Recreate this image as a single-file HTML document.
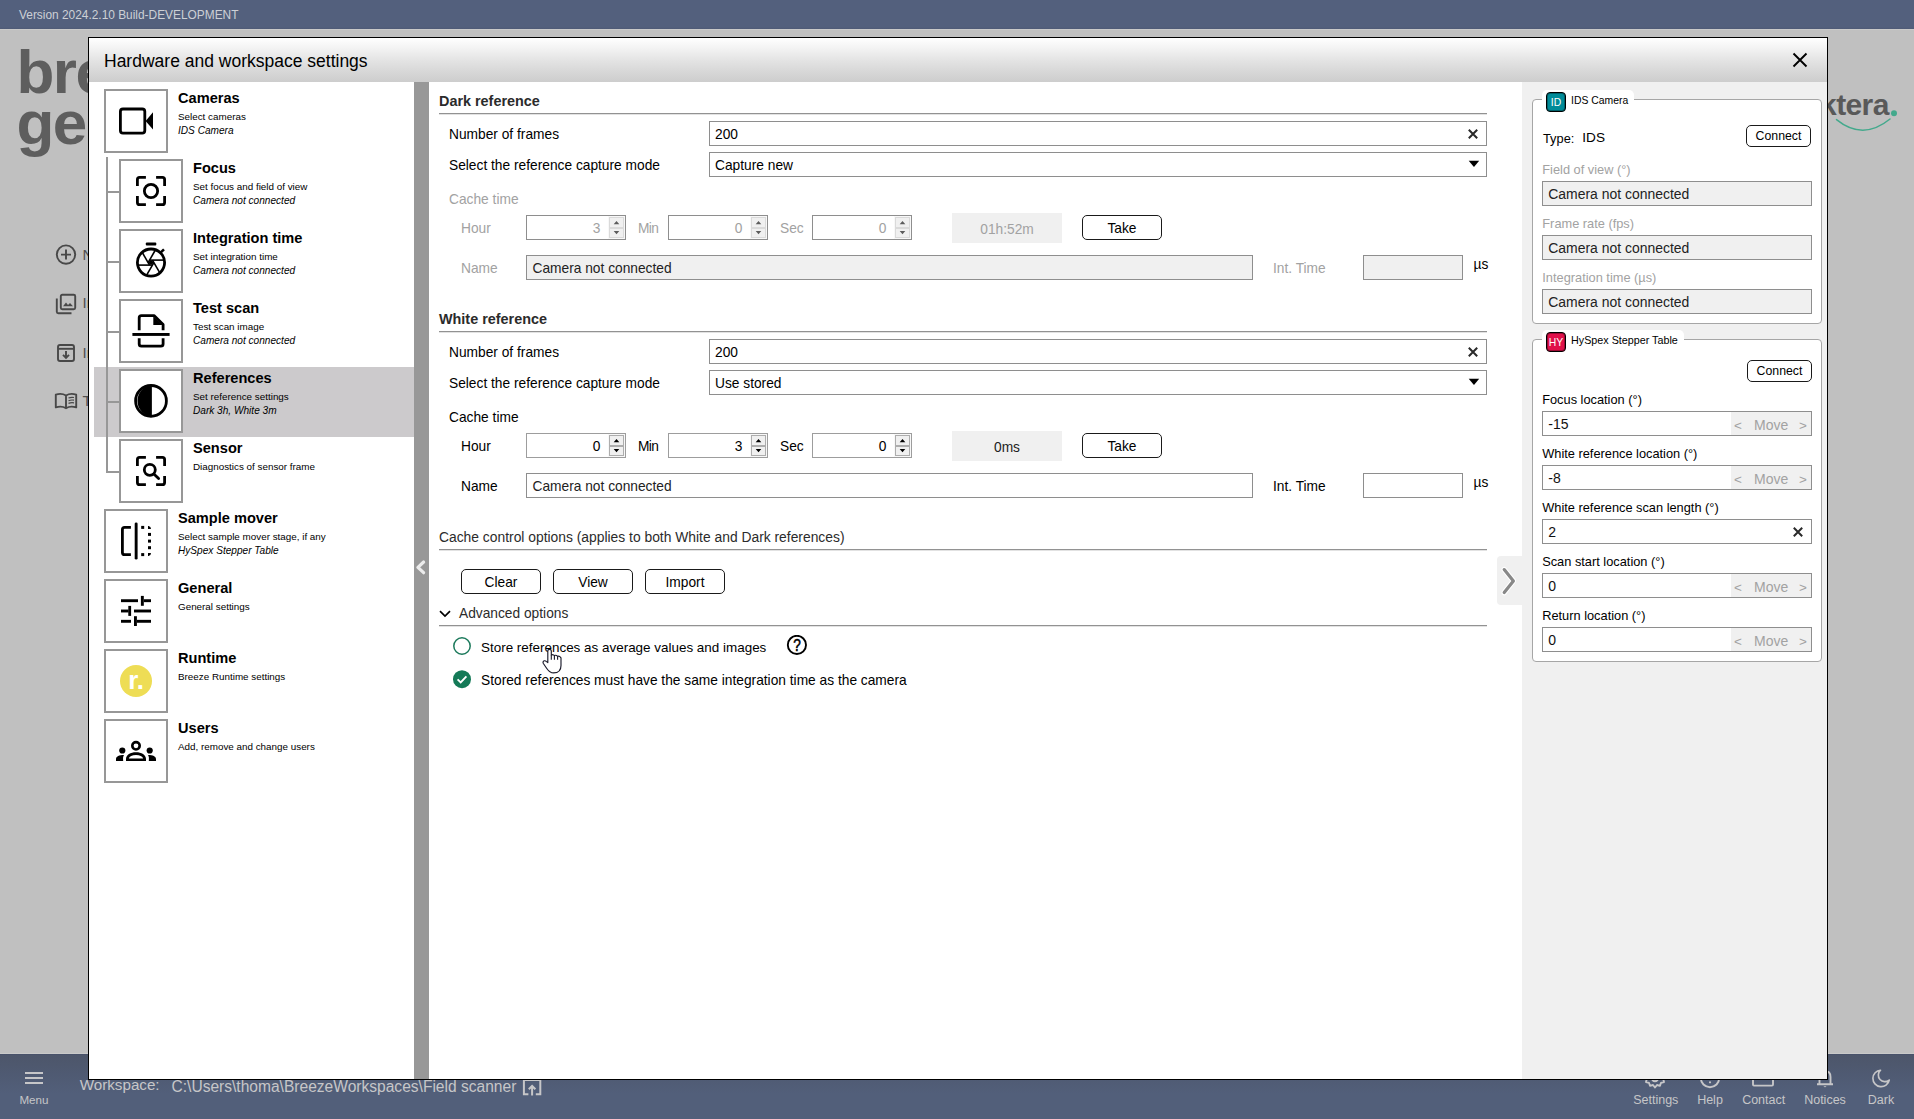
<!DOCTYPE html>
<html lang="en">
<head>
<meta charset="utf-8">
<title>Hardware and workspace settings</title>
<style>
*{box-sizing:border-box;margin:0;padding:0}
html,body{width:1914px;height:1119px;overflow:hidden;background:#c0c0c0}
body{font-family:"Liberation Sans",sans-serif;font-size:13.75px;color:#000;position:relative}
.a{position:absolute;white-space:nowrap;display:block}
.in{border:1px solid #8e8e8e;background:#fff}
.dis{background:#f0f0f0}
.btn{border:1px solid #1a1a1a;border-radius:5px;background:#fff}
.ib{border:2px solid #979797;background:#fff}
.ul{background:#929292;height:1px;box-shadow:0 1px 0 #e2e2e2}
</style>
</head>
<body>
<span class="a" style="top:37px;font-size:62px;line-height:70px;color:#5e5e5e;left:16.5px;font-weight:bold;letter-spacing:-1.5px;">breeze</span>
<span class="a" style="top:88px;font-size:62px;line-height:70px;color:#5e5e5e;left:16.5px;font-weight:bold;letter-spacing:-1.5px;">geo</span>
<svg class="a" style="left:55px;top:244px;" width="22" height="22" viewBox="0 0 22 22"><circle cx="11" cy="10.6" r="9.2" fill="none" stroke="#484848" stroke-width="1.9"/><path d="M11 5.6 V15.6 M6 10.6 H16" stroke="#484848" stroke-width="1.9" fill="none"/></svg>
<span class="a" style="top:245px;font-size:15px;line-height:20px;color:#505050;left:82.5px;">New</span>
<svg class="a" style="left:55px;top:293px;" width="22" height="22" viewBox="0 0 22 22"><rect x="5.8" y="1.8" width="14.4" height="14.4" rx="1.5" fill="none" stroke="#484848" stroke-width="1.9"/><path d="M1.8 5.5 V18.7 Q1.8 20.2 3.3 20.2 H16.5" fill="none" stroke="#484848" stroke-width="1.9"/><path d="M8 13.2 L11 9.5 L13 12 L15 10 L18 13.2 Z" fill="#484848"/></svg>
<span class="a" style="top:293px;font-size:15px;line-height:20px;color:#505050;left:82.5px;">Images</span>
<svg class="a" style="left:56px;top:343px;" width="20" height="20" viewBox="0 0 20 20"><rect x="2" y="2" width="16" height="16" rx="2" fill="none" stroke="#484848" stroke-width="1.9"/><path d="M2 5.8 H18" stroke="#484848" stroke-width="1.9"/><path d="M10 8 V14.5 M7 11.8 L10 14.8 L13 11.8" stroke="#484848" stroke-width="1.9" fill="none"/></svg>
<span class="a" style="top:343px;font-size:15px;line-height:20px;color:#505050;left:82.5px;">Import</span>
<svg class="a" style="left:54px;top:392px;" width="24" height="18" viewBox="0 0 24 18"><path d="M12 3.5 C9 1.6 5 1.6 1.8 2.6 V15.4 C5 14.4 9 14.4 12 16.2 C15 14.4 19 14.4 22.2 15.4 V2.6 C19 1.6 15 1.6 12 3.5 V16" fill="none" stroke="#484848" stroke-width="1.9" stroke-linejoin="round"/><path d="M14.5 6 C16.5 5.2 18.5 5.2 20 5.5 M14.5 8.7 C16.5 7.9 18.5 7.9 20 8.2 M14.5 11.4 C16.5 10.6 18.5 10.6 20 10.9" fill="none" stroke="#484848" stroke-width="1.2"/></svg>
<span class="a" style="top:391px;font-size:15px;line-height:20px;color:#505050;left:82.5px;">Tutorials</span>
<span class="a" style="top:85px;font-size:30px;line-height:40px;color:#595959;left:1488.8px;width:400px;text-align:right;font-weight:bold;letter-spacing:-0.6px;">prediktera</span>
<svg class="a" style="left:1830px;top:105px;" width="70" height="30" viewBox="0 0 70 30"><circle cx="64" cy="8.2" r="3" fill="#43a98c"/><path d="M6.5 14.6 Q33 36 60 14" fill="none" stroke="#43a98c" stroke-width="1.5" stroke-linecap="round"/></svg>
<div class="a" style="left:0px;top:0px;width:1914px;height:29px;background:linear-gradient(#53607d 0px,#53607d 27px,#4e5a76 29px)"></div>
<div class="a" style="left:0px;top:29px;width:1914px;height:1px;background:#c9c9c9"></div>
<span class="a" style="top:5px;font-size:11.9px;line-height:20px;color:#cdd0d6;left:19px;">Version 2024.2.10 Build-DEVELOPMENT</span>
<div class="a" style="left:0px;top:1053px;width:1914px;height:1px;background:#c9c9c9"></div>
<div class="a" style="left:0px;top:1054px;width:1914px;height:65px;background:linear-gradient(#465069 0px,#4d566a 1.5px,#4f5a72 20px,#525f7a 40px,#525f7a 65px)"></div>
<div class="a" style="left:25px;top:1071.5px;width:18px;height:2px;background:#c6c6c8"></div>
<div class="a" style="left:25px;top:1076.8px;width:18px;height:2px;background:#c6c6c8"></div>
<div class="a" style="left:25px;top:1082.2px;width:18px;height:2px;background:#c6c6c8"></div>
<span class="a" style="top:1090px;font-size:11.6px;line-height:20px;color:#c6c6c8;left:-166.1px;width:400px;text-align:center;">Menu</span>
<span class="a" style="top:1075px;font-size:15.2px;line-height:20px;color:#c6c6c8;left:79.7px;">Workspace:</span>
<span class="a" style="top:1077px;font-size:15.57px;line-height:20px;color:#c6c6c8;left:171.5px;">C:\Users\thoma\BreezeWorkspaces\Field scanner</span>
<svg class="a" style="left:522px;top:1077px;" width="20" height="20" viewBox="0 0 20 20"><path d="M6.4 17.3 H1.9 V3 H18.3 V17.3 H13.8" fill="none" stroke="#c6c6c8" stroke-width="2"/><path d="M10.1 18.4 V9.6 M6.8 12.3 L10.1 9 L13.4 12.3" fill="none" stroke="#c6c6c8" stroke-width="2"/></svg>
<span class="a" style="top:1090px;font-size:12.5px;line-height:20px;color:#c6c6c8;left:1455.8px;width:400px;text-align:center;">Settings</span>
<span class="a" style="top:1090px;font-size:12.5px;line-height:20px;color:#c6c6c8;left:1510px;width:400px;text-align:center;">Help</span>
<span class="a" style="top:1090px;font-size:12.5px;line-height:20px;color:#c6c6c8;left:1563.7px;width:400px;text-align:center;">Contact</span>
<span class="a" style="top:1090px;font-size:12.5px;line-height:20px;color:#c6c6c8;left:1625px;width:400px;text-align:center;">Notices</span>
<span class="a" style="top:1090px;font-size:12.5px;line-height:20px;color:#c6c6c8;left:1681px;width:400px;text-align:center;">Dark</span>
<svg class="a" style="left:1643px;top:1066px;" width="24" height="24" viewBox="0 0 24 24"><circle cx="12" cy="12" r="3.2" fill="none" stroke="#c6c6c8" stroke-width="1.9"/><path d="M12 2.5 L14 5 L17 4.2 L18 7.2 L21 8 L20.2 11 L22 12 L20.2 13 L21 16 L18 16.8 L17 19.8 L14 19 L12 21.5 L10 19 L7 19.8 L6 16.8 L3 16 L3.8 13 L2 12 L3.8 11 L3 8 L6 7.2 L7 4.2 L10 5 Z" fill="none" stroke="#c6c6c8" stroke-width="1.9" stroke-linejoin="round"/></svg>
<svg class="a" style="left:1698px;top:1066px;" width="24" height="24" viewBox="0 0 24 24"><circle cx="12" cy="12" r="9.2" fill="none" stroke="#c6c6c8" stroke-width="1.9"/><circle cx="12" cy="16.3" r="1.1" fill="#c6c6c8"/></svg>
<svg class="a" style="left:1751px;top:1066px;" width="24" height="24" viewBox="0 0 24 24"><rect x="2" y="5" width="20" height="14.6" rx="1" fill="none" stroke="#c6c6c8" stroke-width="1.9"/></svg>
<svg class="a" style="left:1813px;top:1066px;" width="24" height="24" viewBox="0 0 24 24"><path d="M4 18.3 H20 M6.5 18 V11 C6.5 7 9 5 12 5 C15 5 17.5 7 17.5 11 V18" fill="none" stroke="#c6c6c8" stroke-width="1.9"/><path d="M10.5 20.3 H13.5 Q12 22 10.5 20.3Z" fill="#c6c6c8"/></svg>
<svg class="a" style="left:1870px;top:1067px;" width="22" height="22" viewBox="0 0 24 24"><path d="M11.5 3.5 A9 9 0 1 0 21 14.2 A6.8 6.8 0 0 1 11.5 3.5 Z" fill="none" stroke="#c6c6c8" stroke-width="1.8" stroke-linejoin="round"/></svg>
<div class="a" style="left:88px;top:37px;width:1740px;height:1043px;background:#000"></div>
<div class="a" style="left:89px;top:38px;width:1738px;height:44px;background:linear-gradient(#ffffff 0%,#f2f2f2 25%,#e4e4e4 50%,#d8d8d8 75%,#cdcdcd 100%)"></div>
<span class="a" style="top:49px;font-size:17.5px;line-height:24px;color:#000;left:104px;">Hardware and workspace settings</span>
<svg class="a" style="left:1791px;top:51px;" width="18" height="18" viewBox="0 0 18 18"><path d="M2.5 2.5 L15.5 15.5 M15.5 2.5 L2.5 15.5" stroke="#000" stroke-width="1.9" fill="none"/></svg>
<div class="a" style="left:89px;top:82px;width:325px;height:997px;background:#fff"></div>
<div class="a" style="left:414px;top:82px;width:15px;height:997px;background:#989898"></div>
<div class="a" style="left:429px;top:82px;width:1093px;height:997px;background:#fff"></div>
<div class="a" style="left:1522px;top:82px;width:305px;height:997px;background:#f0f0f0"></div>
<svg class="a" style="left:414px;top:557px;" width="15" height="22" viewBox="0 0 15 22"><path d="M9.6 5 L3.9 10.3 L9.6 15.7" fill="none" stroke="#ececec" stroke-width="3.2" stroke-linecap="round" stroke-linejoin="round"/></svg>
<div class="a" style="left:94px;top:367px;width:320px;height:70px;background:#cccacc"></div>
<div class="a" style="left:106px;top:157px;width:2px;height:316px;background:#979797"></div>
<div class="a ib" style="left:104px;top:89px;width:64px;height:64px;"></div>
<svg class="a" style="left:104px;top:89px;" width="64" height="64" viewBox="0 0 64 64"><rect x="16.4" y="20" width="24.4" height="24.1" rx="2.6" fill="none" stroke="#000" stroke-width="2.8"/><path d="M41.6 32 L49 23.3 L49 40.6 Z" fill="#000"/></svg>
<span class="a" style="top:88px;font-size:14.6px;line-height:20px;color:#000;left:178px;font-weight:bold;">Cameras</span>
<span class="a" style="top:107px;font-size:9.85px;line-height:20px;color:#000;left:178px;">Select cameras</span>
<span class="a" style="top:121px;font-size:10.1px;line-height:20px;color:#000;left:178px;font-style:italic;">IDS Camera</span>
<div class="a" style="left:106px;top:191px;width:13px;height:2px;background:#979797"></div>
<div class="a ib" style="left:119px;top:159px;width:64px;height:64px;"></div>
<svg class="a" style="left:119px;top:159px;" width="64" height="64" viewBox="0 0 64 64"><path d="M18.4 26.9 V20.599999999999998 Q18.4 18.4 20.599999999999998 18.4 H26.9" fill="none" stroke="#000" stroke-width="2.8"/><path d="M37.1 18.4 H43.4 Q45.6 18.4 45.6 20.599999999999998 V26.9" fill="none" stroke="#000" stroke-width="2.8"/><path d="M18.4 37.1 V43.4 Q18.4 45.6 20.599999999999998 45.6 H26.9" fill="none" stroke="#000" stroke-width="2.8"/><path d="M37.1 45.6 H43.4 Q45.6 45.6 45.6 43.4 V37.1" fill="none" stroke="#000" stroke-width="2.8"/><circle cx="32" cy="32" r="6.65" fill="none" stroke="#000" stroke-width="2.8"/></svg>
<span class="a" style="top:158px;font-size:14.6px;line-height:20px;color:#000;left:193px;font-weight:bold;">Focus</span>
<span class="a" style="top:177px;font-size:9.85px;line-height:20px;color:#000;left:193px;">Set focus and field of view</span>
<span class="a" style="top:191px;font-size:10.1px;line-height:20px;color:#000;left:193px;font-style:italic;">Camera not connected</span>
<div class="a" style="left:106px;top:261px;width:13px;height:2px;background:#979797"></div>
<div class="a ib" style="left:119px;top:229px;width:64px;height:64px;"></div>
<svg class="a" style="left:119px;top:229px;" width="64" height="64" viewBox="0 0 64 64"><rect x="26.8" y="13.6" width="10.5" height="3" rx="1" fill="#000"/><circle cx="32" cy="33.6" r="13.6" fill="none" stroke="#000" stroke-width="2.8"/><path d="M41.8 23.4 L45 20.4" stroke="#000" stroke-width="2.6" fill="none"/><path d="M30.56 31.10 L45.37 31.10" stroke="#000" stroke-width="1.6" fill="none"/><path d="M33.44 31.10 L40.85 43.93" stroke="#000" stroke-width="1.6" fill="none"/><path d="M34.89 33.60 L27.48 46.43" stroke="#000" stroke-width="1.6" fill="none"/><path d="M33.44 36.10 L18.63 36.10" stroke="#000" stroke-width="1.6" fill="none"/><path d="M30.56 36.10 L23.15 23.27" stroke="#000" stroke-width="1.6" fill="none"/><path d="M29.11 33.60 L36.52 20.77" stroke="#000" stroke-width="1.6" fill="none"/><circle cx="32" cy="33.6" r="2.2" fill="#000"/></svg>
<span class="a" style="top:228px;font-size:14.6px;line-height:20px;color:#000;left:193px;font-weight:bold;">Integration time</span>
<span class="a" style="top:247px;font-size:9.85px;line-height:20px;color:#000;left:193px;">Set integration time</span>
<span class="a" style="top:261px;font-size:10.1px;line-height:20px;color:#000;left:193px;font-style:italic;">Camera not connected</span>
<div class="a" style="left:106px;top:331px;width:13px;height:2px;background:#979797"></div>
<div class="a ib" style="left:119px;top:299px;width:64px;height:64px;"></div>
<svg class="a" style="left:119px;top:299px;" width="64" height="64" viewBox="0 0 64 64"><path d="M20.2 31.2 V18.8 Q20.2 16.6 22.4 16.6 H35 L44.1 25.6 V31.2" fill="none" stroke="#000" stroke-width="2.8" stroke-linejoin="round"/><path d="M34.3 17.2 V26 H43.5 Z" fill="#000"/><rect x="13.4" y="34" width="37.2" height="2.9" fill="#000"/><path d="M20.2 39.2 V45 Q20.2 47.2 22.4 47.2 H41.9 Q44.1 47.2 44.1 45 V39.2" fill="none" stroke="#000" stroke-width="2.8"/></svg>
<span class="a" style="top:298px;font-size:14.6px;line-height:20px;color:#000;left:193px;font-weight:bold;">Test scan</span>
<span class="a" style="top:317px;font-size:9.85px;line-height:20px;color:#000;left:193px;">Test scan image</span>
<span class="a" style="top:331px;font-size:10.1px;line-height:20px;color:#000;left:193px;font-style:italic;">Camera not connected</span>
<div class="a" style="left:106px;top:401px;width:13px;height:2px;background:#979797"></div>
<div class="a ib" style="left:119px;top:369px;width:64px;height:64px;"></div>
<svg class="a" style="left:119px;top:369px;" width="64" height="64" viewBox="0 0 64 64"><circle cx="32" cy="31.9" r="15.4" fill="none" stroke="#000" stroke-width="2.8"/><path d="M32.9 16.53 A15.4 15.4 0 0 0 32.9 47.27 Z" fill="#000"/></svg>
<span class="a" style="top:368px;font-size:14.6px;line-height:20px;color:#000;left:193px;font-weight:bold;">References</span>
<span class="a" style="top:387px;font-size:9.85px;line-height:20px;color:#000;left:193px;">Set reference settings</span>
<span class="a" style="top:401px;font-size:10.1px;line-height:20px;color:#000;left:193px;font-style:italic;">Dark 3h, White 3m</span>
<div class="a" style="left:106px;top:471px;width:13px;height:2px;background:#979797"></div>
<div class="a ib" style="left:119px;top:439px;width:64px;height:64px;"></div>
<svg class="a" style="left:119px;top:439px;" width="64" height="64" viewBox="0 0 64 64"><path d="M18.4 26.9 V20.599999999999998 Q18.4 18.4 20.599999999999998 18.4 H26.9" fill="none" stroke="#000" stroke-width="2.8"/><path d="M37.1 18.4 H43.4 Q45.6 18.4 45.6 20.599999999999998 V26.9" fill="none" stroke="#000" stroke-width="2.8"/><path d="M18.4 37.1 V43.4 Q18.4 45.6 20.599999999999998 45.6 H26.9" fill="none" stroke="#000" stroke-width="2.8"/><path d="M37.1 45.6 H43.4 Q45.6 45.6 45.6 43.4 V37.1" fill="none" stroke="#000" stroke-width="2.8"/><circle cx="30.8" cy="30.8" r="5.5" fill="none" stroke="#000" stroke-width="2.8"/><path d="M34.9 34.9 L39.6 39.5" stroke="#000" stroke-width="2.8" stroke-linecap="round" fill="none"/></svg>
<span class="a" style="top:438px;font-size:14.6px;line-height:20px;color:#000;left:193px;font-weight:bold;">Sensor</span>
<span class="a" style="top:457px;font-size:9.85px;line-height:20px;color:#000;left:193px;">Diagnostics of sensor frame</span>
<div class="a ib" style="left:104px;top:509px;width:64px;height:64px;"></div>
<svg class="a" style="left:104px;top:509px;" width="64" height="64" viewBox="0 0 64 64"><path d="M26.9 18.4 H20.6 Q18.4 18.4 18.4 20.6 V43.4 Q18.4 45.6 20.6 45.6 H26.9" fill="none" stroke="#000" stroke-width="2.8"/><rect x="30.7" y="13.4" width="2.9" height="37.2" rx="1.4" fill="#000"/><rect x="37.2" y="16.9" width="3" height="3" fill="#000"/><rect x="37.2" y="44.1" width="3" height="3" fill="#000"/><rect x="44" y="23.9" width="3" height="3" fill="#000"/><rect x="44" y="30.6" width="3" height="3" fill="#000"/><rect x="44" y="37.2" width="3" height="3" fill="#000"/><path d="M44 16.9 H44.6 Q47 17.2 47 19.9 H44 Z" fill="#000"/><path d="M44 47.1 H44.6 Q47 46.8 47 44.1 H44 Z" fill="#000"/></svg>
<span class="a" style="top:508px;font-size:14.6px;line-height:20px;color:#000;left:178px;font-weight:bold;">Sample mover</span>
<span class="a" style="top:527px;font-size:9.85px;line-height:20px;color:#000;left:178px;">Select sample mover stage, if any</span>
<span class="a" style="top:541px;font-size:10.1px;line-height:20px;color:#000;left:178px;font-style:italic;">HySpex Stepper Table</span>
<div class="a ib" style="left:104px;top:579px;width:64px;height:64px;"></div>
<svg class="a" style="left:104px;top:579px;" width="64" height="64" viewBox="0 0 64 64"><rect x="17" y="20.25" width="17.00" height="2.9" fill="#000"/><rect x="36.9" y="16.9" width="2.90" height="9.90" fill="#000"/><rect x="39.8" y="20.25" width="7.20" height="2.9" fill="#000"/><rect x="17" y="30.55" width="7.60" height="2.9" fill="#000"/><rect x="24.3" y="26.9" width="2.80" height="10.00" fill="#000"/><rect x="30" y="30.55" width="17.00" height="2.9" fill="#000"/><rect x="17" y="40.85" width="10.00" height="2.9" fill="#000"/><rect x="30" y="37.2" width="2.90" height="9.80" fill="#000"/><rect x="32.9" y="40.85" width="14.10" height="2.9" fill="#000"/></svg>
<span class="a" style="top:578px;font-size:14.6px;line-height:20px;color:#000;left:178px;font-weight:bold;">General</span>
<span class="a" style="top:597px;font-size:9.85px;line-height:20px;color:#000;left:178px;">General settings</span>
<div class="a ib" style="left:104px;top:649px;width:64px;height:64px;"></div>
<svg class="a" style="left:104px;top:649px;" width="64" height="64" viewBox="0 0 64 64"><circle cx="32" cy="32" r="16" fill="#eedd55"/><text x="24.2" y="39.5" font-family="Liberation Sans,sans-serif" font-weight="bold" font-size="26" fill="#fff">r.</text></svg>
<span class="a" style="top:648px;font-size:14.6px;line-height:20px;color:#000;left:178px;font-weight:bold;">Runtime</span>
<span class="a" style="top:667px;font-size:9.85px;line-height:20px;color:#000;left:178px;">Breeze Runtime settings</span>
<div class="a ib" style="left:104px;top:719px;width:64px;height:64px;"></div>
<svg class="a" style="left:104px;top:719px;" width="64" height="64" viewBox="0 0 64 64"><circle cx="32" cy="26.8" r="3.7" fill="none" stroke="#000" stroke-width="2.6"/><path d="M22 42 V40 C22 35.6 26.5 33.2 32 33.2 C37.5 33.2 42 35.6 42 40 V42 Z M24.8 39.4 H39.2 C38.6 37.2 35.8 35.9 32 35.9 C28.2 35.9 25.4 37.2 24.8 39.4 Z" fill="#000" fill-rule="evenodd"/><circle cx="18.3" cy="31.5" r="3.1" fill="#000"/><circle cx="45.7" cy="31.5" r="3.1" fill="#000"/><path d="M12 42 V40 C12 37.4 15 35.9 20 35.9 C19 37.6 18.9 39 19.2 42 Z" fill="#000"/><path d="M52 42 V40 C52 37.4 49 35.9 44 35.9 C45 37.6 45.1 39 44.8 42 Z" fill="#000"/></svg>
<span class="a" style="top:718px;font-size:14.6px;line-height:20px;color:#000;left:178px;font-weight:bold;">Users</span>
<span class="a" style="top:737px;font-size:9.85px;line-height:20px;color:#000;left:178px;">Add, remove and change users</span>
<span class="a" style="top:91px;font-size:14.4px;line-height:20px;color:#2b2b2b;left:439px;font-weight:bold;">Dark reference</span>
<div class="a ul" style="left:439px;top:113px;width:1048px;height:1px;"></div>
<span class="a" style="top:125px;font-size:13.75px;line-height:20px;left:449px;">Number of frames</span>
<div class="a in" style="left:709px;top:121px;width:778px;height:25px;"></div>
<span class="a" style="top:125px;font-size:13.75px;line-height:20px;left:715px;">200</span>
<svg class="a" style="left:1467.3px;top:127.5px;" width="12" height="12" viewBox="0 0 12 12"><path d="M1.8 1.8 L10.2 10.2 M10.2 1.8 L1.8 10.2" stroke="#2a2a2a" stroke-width="2" fill="none"/></svg>
<span class="a" style="top:156px;font-size:13.75px;line-height:20px;left:449px;">Select the reference capture mode</span>
<div class="a in" style="left:709px;top:152px;width:778px;height:25px;"></div>
<span class="a" style="top:156px;font-size:13.75px;line-height:20px;left:715px;">Capture new</span>
<svg class="a" style="left:1468px;top:160px;" width="12" height="8" viewBox="0 0 12 8"><path d="M0.7 0.7 H11.2 L5.95 7 Z" fill="#000"/></svg>
<span class="a" style="top:190px;font-size:13.75px;line-height:20px;color:#a2a2a2;left:449px;">Cache time</span>
<span class="a" style="top:219px;font-size:13.75px;line-height:20px;color:#a2a2a2;left:461px;">Hour</span>
<div class="a in" style="left:526px;top:215px;width:100px;height:25px;border-color:#8e8e8e"></div>
<div class="a" style="left:608px;top:216px;width:17px;height:23px;background:#f8f8f8"></div>
<span class="a" style="top:219px;font-size:13.75px;line-height:20px;color:#a2a2a2;left:200.5px;width:400px;text-align:right;">3</span>
<div class="a" style="left:609px;top:217px;width:15px;height:11px;background:#f0f0f0;border:1px solid #dadada"></div>
<div class="a" style="left:609px;top:228px;width:15px;height:10px;background:#f0f0f0;border:1px solid #dadada"></div>
<svg class="a" style="left:609px;top:217px;" width="15" height="21" viewBox="0 0 15 21"><path d="M4.7 7.3 L7.5 3.9 L10.3 7.3 Z M4.7 13.9 L7.5 17.3 L10.3 13.9 Z" fill="#5c5c5c"/></svg>
<span class="a" style="top:219px;font-size:13.75px;line-height:20px;color:#a2a2a2;left:638px;letter-spacing:-0.6px;">Min</span>
<div class="a in" style="left:668px;top:215px;width:100px;height:25px;border-color:#8e8e8e"></div>
<div class="a" style="left:750px;top:216px;width:17px;height:23px;background:#f8f8f8"></div>
<span class="a" style="top:219px;font-size:13.75px;line-height:20px;color:#a2a2a2;left:342.5px;width:400px;text-align:right;">0</span>
<div class="a" style="left:751px;top:217px;width:15px;height:11px;background:#f0f0f0;border:1px solid #dadada"></div>
<div class="a" style="left:751px;top:228px;width:15px;height:10px;background:#f0f0f0;border:1px solid #dadada"></div>
<svg class="a" style="left:751px;top:217px;" width="15" height="21" viewBox="0 0 15 21"><path d="M4.7 7.3 L7.5 3.9 L10.3 7.3 Z M4.7 13.9 L7.5 17.3 L10.3 13.9 Z" fill="#5c5c5c"/></svg>
<span class="a" style="top:219px;font-size:13.75px;line-height:20px;color:#a2a2a2;left:780px;">Sec</span>
<div class="a in" style="left:812px;top:215px;width:100px;height:25px;border-color:#8e8e8e"></div>
<div class="a" style="left:894px;top:216px;width:17px;height:23px;background:#f8f8f8"></div>
<span class="a" style="top:219px;font-size:13.75px;line-height:20px;color:#a2a2a2;left:486.5px;width:400px;text-align:right;">0</span>
<div class="a" style="left:895px;top:217px;width:15px;height:11px;background:#f0f0f0;border:1px solid #dadada"></div>
<div class="a" style="left:895px;top:228px;width:15px;height:10px;background:#f0f0f0;border:1px solid #dadada"></div>
<svg class="a" style="left:895px;top:217px;" width="15" height="21" viewBox="0 0 15 21"><path d="M4.7 7.3 L7.5 3.9 L10.3 7.3 Z M4.7 13.9 L7.5 17.3 L10.3 13.9 Z" fill="#5c5c5c"/></svg>
<div class="a" style="left:952px;top:213px;width:110px;height:30px;background:#f0f0f0"></div>
<span class="a" style="top:220px;font-size:13.75px;line-height:20px;color:#a2a2a2;left:807px;width:400px;text-align:center;">01h:52m</span>
<div class="a btn" style="left:1082px;top:215px;width:80px;height:25px;"></div>
<span class="a" style="top:219px;font-size:13.75px;line-height:20px;color:#000;left:922px;width:400px;text-align:center;">Take</span>
<span class="a" style="top:259px;font-size:13.75px;line-height:20px;color:#a2a2a2;left:461px;">Name</span>
<div class="a in dis" style="left:526px;top:255px;width:727px;height:25px;"></div>
<span class="a" style="top:259px;font-size:13.75px;line-height:20px;color:#222;left:532.5px;">Camera not connected</span>
<span class="a" style="top:259px;font-size:13.75px;line-height:20px;color:#a2a2a2;left:1273px;">Int. Time</span>
<div class="a in dis" style="left:1363px;top:255px;width:100px;height:25px;"></div>
<span class="a" style="top:255px;font-size:13.75px;line-height:20px;color:#000;left:1473.5px;">µs</span>
<span class="a" style="top:309px;font-size:14.4px;line-height:20px;color:#2b2b2b;left:439px;font-weight:bold;">White reference</span>
<div class="a ul" style="left:439px;top:331px;width:1048px;height:1px;"></div>
<span class="a" style="top:343px;font-size:13.75px;line-height:20px;left:449px;">Number of frames</span>
<div class="a in" style="left:709px;top:339px;width:778px;height:25px;"></div>
<span class="a" style="top:343px;font-size:13.75px;line-height:20px;left:715px;">200</span>
<svg class="a" style="left:1467.3px;top:345.5px;" width="12" height="12" viewBox="0 0 12 12"><path d="M1.8 1.8 L10.2 10.2 M10.2 1.8 L1.8 10.2" stroke="#2a2a2a" stroke-width="2" fill="none"/></svg>
<span class="a" style="top:374px;font-size:13.75px;line-height:20px;left:449px;">Select the reference capture mode</span>
<div class="a in" style="left:709px;top:370px;width:778px;height:25px;"></div>
<span class="a" style="top:374px;font-size:13.75px;line-height:20px;left:715px;">Use stored</span>
<svg class="a" style="left:1468px;top:378px;" width="12" height="8" viewBox="0 0 12 8"><path d="M0.7 0.7 H11.2 L5.95 7 Z" fill="#000"/></svg>
<span class="a" style="top:408px;font-size:13.75px;line-height:20px;color:#000;left:449px;">Cache time</span>
<span class="a" style="top:437px;font-size:13.75px;line-height:20px;color:#000;left:461px;">Hour</span>
<div class="a in" style="left:526px;top:433px;width:100px;height:25px;border-color:#9d9d9d"></div>
<div class="a" style="left:608px;top:434px;width:17px;height:23px;background:#f8f8f8"></div>
<span class="a" style="top:437px;font-size:13.75px;line-height:20px;color:#000;left:200.5px;width:400px;text-align:right;">0</span>
<div class="a" style="left:609px;top:435px;width:15px;height:11px;background:#f0f0f0;border:1px solid #adadad"></div>
<div class="a" style="left:609px;top:446px;width:15px;height:10px;background:#f0f0f0;border:1px solid #adadad"></div>
<svg class="a" style="left:609px;top:435px;" width="15" height="21" viewBox="0 0 15 21"><path d="M4.7 7.3 L7.5 3.9 L10.3 7.3 Z M4.7 13.9 L7.5 17.3 L10.3 13.9 Z" fill="#000"/></svg>
<span class="a" style="top:437px;font-size:13.75px;line-height:20px;color:#000;left:638px;letter-spacing:-0.6px;">Min</span>
<div class="a in" style="left:668px;top:433px;width:100px;height:25px;border-color:#9d9d9d"></div>
<div class="a" style="left:750px;top:434px;width:17px;height:23px;background:#f8f8f8"></div>
<span class="a" style="top:437px;font-size:13.75px;line-height:20px;color:#000;left:342.5px;width:400px;text-align:right;">3</span>
<div class="a" style="left:751px;top:435px;width:15px;height:11px;background:#f0f0f0;border:1px solid #adadad"></div>
<div class="a" style="left:751px;top:446px;width:15px;height:10px;background:#f0f0f0;border:1px solid #adadad"></div>
<svg class="a" style="left:751px;top:435px;" width="15" height="21" viewBox="0 0 15 21"><path d="M4.7 7.3 L7.5 3.9 L10.3 7.3 Z M4.7 13.9 L7.5 17.3 L10.3 13.9 Z" fill="#000"/></svg>
<span class="a" style="top:437px;font-size:13.75px;line-height:20px;color:#000;left:780px;">Sec</span>
<div class="a in" style="left:812px;top:433px;width:100px;height:25px;border-color:#9d9d9d"></div>
<div class="a" style="left:894px;top:434px;width:17px;height:23px;background:#f8f8f8"></div>
<span class="a" style="top:437px;font-size:13.75px;line-height:20px;color:#000;left:486.5px;width:400px;text-align:right;">0</span>
<div class="a" style="left:895px;top:435px;width:15px;height:11px;background:#f0f0f0;border:1px solid #adadad"></div>
<div class="a" style="left:895px;top:446px;width:15px;height:10px;background:#f0f0f0;border:1px solid #adadad"></div>
<svg class="a" style="left:895px;top:435px;" width="15" height="21" viewBox="0 0 15 21"><path d="M4.7 7.3 L7.5 3.9 L10.3 7.3 Z M4.7 13.9 L7.5 17.3 L10.3 13.9 Z" fill="#000"/></svg>
<div class="a" style="left:952px;top:431px;width:110px;height:30px;background:#f0f0f0"></div>
<span class="a" style="top:438px;font-size:13.75px;line-height:20px;color:#222;left:807px;width:400px;text-align:center;">0ms</span>
<div class="a btn" style="left:1082px;top:433px;width:80px;height:25px;"></div>
<span class="a" style="top:437px;font-size:13.75px;line-height:20px;color:#000;left:922px;width:400px;text-align:center;">Take</span>
<span class="a" style="top:477px;font-size:13.75px;line-height:20px;color:#000;left:461px;">Name</span>
<div class="a in" style="left:526px;top:473px;width:727px;height:25px;"></div>
<span class="a" style="top:477px;font-size:13.75px;line-height:20px;color:#222;left:532.5px;">Camera not connected</span>
<span class="a" style="top:477px;font-size:13.75px;line-height:20px;color:#000;left:1273px;">Int. Time</span>
<div class="a in" style="left:1363px;top:473px;width:100px;height:25px;"></div>
<span class="a" style="top:473px;font-size:13.75px;line-height:20px;color:#000;left:1473.5px;">µs</span>
<span class="a" style="top:527px;font-size:13.85px;line-height:20px;color:#2b2b2b;left:439px;">Cache control options (applies to both White and Dark references)</span>
<div class="a ul" style="left:439px;top:549px;width:1048px;height:1px;"></div>
<div class="a btn" style="left:461px;top:569px;width:80px;height:25px;"></div>
<span class="a" style="top:573px;font-size:13.75px;line-height:20px;color:#000;left:301px;width:400px;text-align:center;">Clear</span>
<div class="a btn" style="left:553px;top:569px;width:80px;height:25px;"></div>
<span class="a" style="top:573px;font-size:13.75px;line-height:20px;color:#000;left:393px;width:400px;text-align:center;">View</span>
<div class="a btn" style="left:645px;top:569px;width:80px;height:25px;"></div>
<span class="a" style="top:573px;font-size:13.75px;line-height:20px;color:#000;left:485px;width:400px;text-align:center;">Import</span>
<svg class="a" style="left:438px;top:607px;" width="14" height="12" viewBox="0 0 14 12"><path d="M2 4.2 L7 9 L12 4.2" fill="none" stroke="#000" stroke-width="1.7"/></svg>
<span class="a" style="top:604px;font-size:13.75px;line-height:20px;color:#2b2b2b;left:459px;">Advanced options</span>
<div class="a ul" style="left:439px;top:625px;width:1048px;height:1px;"></div>
<svg class="a" style="left:452px;top:636px;" width="20" height="20" viewBox="0 0 20 20"><circle cx="10" cy="10" r="8.2" fill="#fff" stroke="#1d7a5c" stroke-width="1.5"/></svg>
<span class="a" style="top:638px;font-size:13.45px;line-height:20px;left:481px;">Store references as average values and images</span>
<svg class="a" style="left:786px;top:635px;" width="22" height="22" viewBox="0 0 22 22"><circle cx="10.9" cy="9.9" r="9.1" fill="none" stroke="#000" stroke-width="1.9"/><text transform="translate(11.1 15.8) scale(0.84 1)" x="0" y="0" text-anchor="middle" font-family="Liberation Sans,sans-serif" font-size="16.2" fill="#000" stroke="#000" stroke-width="0.55">?</text></svg>
<svg class="a" style="left:452px;top:669px;" width="20" height="20" viewBox="0 0 20 20"><circle cx="10" cy="10.2" r="9" fill="#147a57"/><path d="M5.6 10.4 L8.7 13.4 L14.4 7.4" fill="none" stroke="#fff" stroke-width="1.9"/></svg>
<span class="a" style="top:671px;font-size:13.75px;line-height:20px;left:481px;">Stored references must have the same integration time as the camera</span>
<svg class="a" style="left:541.5px;top:648px;" width="21" height="27" viewBox="0 0 21 27"><path d="M5.8 14.6 V2.9 Q5.8 1.3 7.55 1.3 Q9.3 1.3 9.3 2.9 V7.4 Q10.9 5.9 12.4 7.6 Q14 6.6 15.6 8.4 Q17.3 7.6 19 9.8 V17.5 Q19 24.9 11.6 24.9 Q7.8 24.9 4.6 20.2 L1.2 15.2 Q0.6 13.4 2.2 12.8 Q3.4 12.5 4.2 13.4 Z" fill="#fff" stroke="#1a1a2a" stroke-width="1.15" stroke-linejoin="round"/><path d="M9.3 7.4 V11.8 M12.4 8 V11.8 M15.6 8.8 V11.8" stroke="#1a1a2a" stroke-width="1.1" fill="none"/></svg>
<div class="a" style="left:1497px;top:556px;width:26px;height:49px;background:#f0f0f0;border-radius:4px 0 0 4px"></div>
<svg class="a" style="left:1497px;top:556px;" width="25" height="49" viewBox="0 0 25 49"><path d="M7.2 13.6 L16.4 24.9 L7.2 36.6" fill="none" stroke="#fff" stroke-width="5.4" stroke-linecap="round" stroke-linejoin="round"/><path d="M7.2 13.6 L16.4 24.9 L7.2 36.6" fill="none" stroke="#888" stroke-width="3.2" stroke-linecap="round" stroke-linejoin="round"/></svg>
<div class="a" style="left:1532px;top:99px;width:290px;height:225px;border:1px solid #a6a6a6;border-radius:4px;background:#fff"></div>
<div class="a" style="left:1542px;top:90px;width:92px;height:22px;background:#fff;border-radius:5px"></div>
<div class="a" style="left:1546px;top:92px;width:20px;height:20px;background:#008b98;border:1px solid #000;border-radius:4px;box-shadow:inset 0 0 0 1px rgba(0,0,0,0.3)"></div>
<span class="a" style="top:93px;font-size:10.4px;line-height:20px;color:#fff;left:1356px;width:400px;text-align:center;">ID</span>
<span class="a" style="top:91px;font-size:10.4px;line-height:20px;color:#000;left:1571px;">IDS Camera</span>
<span class="a" style="top:129px;font-size:12.8px;line-height:20px;color:#000;left:1543px;">Type:</span>
<span class="a" style="top:128px;font-size:13.6px;line-height:20px;color:#000;left:1582.3px;">IDS</span>
<div class="a btn" style="left:1746px;top:125px;width:65px;height:22px;"></div>
<span class="a" style="top:126px;font-size:12.3px;line-height:20px;color:#000;left:1578.5px;width:400px;text-align:center;">Connect</span>
<span class="a" style="top:160px;font-size:12.8px;line-height:20px;color:#a2a2a2;left:1542.3px;">Field of view (°)</span>
<div class="a in dis" style="left:1542px;top:181px;width:270px;height:25px;"></div>
<span class="a" style="top:184px;font-size:13.95px;line-height:20px;color:#222;left:1548.3px;">Camera not connected</span>
<span class="a" style="top:214px;font-size:12.8px;line-height:20px;color:#a2a2a2;left:1542.3px;">Frame rate (fps)</span>
<div class="a in dis" style="left:1542px;top:235px;width:270px;height:25px;"></div>
<span class="a" style="top:238px;font-size:13.95px;line-height:20px;color:#222;left:1548.3px;">Camera not connected</span>
<span class="a" style="top:268px;font-size:12.8px;line-height:20px;color:#a2a2a2;left:1542.3px;">Integration time (µs)</span>
<div class="a in dis" style="left:1542px;top:289px;width:270px;height:25px;"></div>
<span class="a" style="top:292px;font-size:13.95px;line-height:20px;color:#222;left:1548.3px;">Camera not connected</span>
<div class="a" style="left:1532px;top:339px;width:290px;height:323px;border:1px solid #a6a6a6;border-radius:4px;background:#fff"></div>
<div class="a" style="left:1542px;top:330px;width:142px;height:22px;background:#fff;border-radius:5px"></div>
<div class="a" style="left:1546px;top:332px;width:20px;height:20px;background:#e0114a;border:1px solid #000;border-radius:4px;box-shadow:inset 0 0 0 1px rgba(0,0,0,0.3)"></div>
<span class="a" style="top:333px;font-size:10.4px;line-height:20px;color:#fff;left:1356px;width:400px;text-align:center;">HY</span>
<span class="a" style="top:330px;font-size:10.75px;line-height:20px;color:#000;left:1571px;">HySpex Stepper Table</span>
<div class="a btn" style="left:1747px;top:360px;width:65px;height:22px;"></div>
<span class="a" style="top:361px;font-size:12.3px;line-height:20px;color:#000;left:1579.5px;width:400px;text-align:center;">Connect</span>
<span class="a" style="top:390px;font-size:12.8px;line-height:20px;color:#000;left:1542.2px;">Focus location (°)</span>
<div class="a in" style="left:1542px;top:411px;width:270px;height:25px;"></div>
<span class="a" style="top:414px;font-size:14px;line-height:20px;color:#111;left:1548.3px;">-15</span>
<div class="a" style="left:1731px;top:412px;width:80px;height:23px;background:#f0f0f0"></div>
<span class="a" style="top:416px;font-size:13.5px;line-height:20px;color:#a2a2a2;left:1734px;">&lt;</span>
<span class="a" style="top:415px;font-size:14px;line-height:20px;color:#a2a2a2;left:1754px;">Move</span>
<span class="a" style="top:416px;font-size:13.5px;line-height:20px;color:#a2a2a2;left:1799px;">&gt;</span>
<span class="a" style="top:444px;font-size:12.8px;line-height:20px;color:#000;left:1542.2px;">White reference location (°)</span>
<div class="a in" style="left:1542px;top:465px;width:270px;height:25px;"></div>
<span class="a" style="top:468px;font-size:14px;line-height:20px;color:#111;left:1548.3px;">-8</span>
<div class="a" style="left:1731px;top:466px;width:80px;height:23px;background:#f0f0f0"></div>
<span class="a" style="top:470px;font-size:13.5px;line-height:20px;color:#a2a2a2;left:1734px;">&lt;</span>
<span class="a" style="top:469px;font-size:14px;line-height:20px;color:#a2a2a2;left:1754px;">Move</span>
<span class="a" style="top:470px;font-size:13.5px;line-height:20px;color:#a2a2a2;left:1799px;">&gt;</span>
<span class="a" style="top:498px;font-size:12.8px;line-height:20px;color:#000;left:1542.2px;">White reference scan length (°)</span>
<div class="a in" style="left:1542px;top:519px;width:270px;height:25px;"></div>
<span class="a" style="top:522px;font-size:14px;line-height:20px;color:#111;left:1548.3px;">2</span>
<svg class="a" style="left:1792px;top:525.5px;" width="12" height="12" viewBox="0 0 12 12"><path d="M1.8 1.8 L10.2 10.2 M10.2 1.8 L1.8 10.2" stroke="#2a2a2a" stroke-width="2" fill="none"/></svg>
<span class="a" style="top:552px;font-size:12.8px;line-height:20px;color:#000;left:1542.2px;">Scan start location (°)</span>
<div class="a in" style="left:1542px;top:573px;width:270px;height:25px;"></div>
<span class="a" style="top:576px;font-size:14px;line-height:20px;color:#111;left:1548.3px;">0</span>
<div class="a" style="left:1731px;top:574px;width:80px;height:23px;background:#f0f0f0"></div>
<span class="a" style="top:578px;font-size:13.5px;line-height:20px;color:#a2a2a2;left:1734px;">&lt;</span>
<span class="a" style="top:577px;font-size:14px;line-height:20px;color:#a2a2a2;left:1754px;">Move</span>
<span class="a" style="top:578px;font-size:13.5px;line-height:20px;color:#a2a2a2;left:1799px;">&gt;</span>
<span class="a" style="top:606px;font-size:12.8px;line-height:20px;color:#000;left:1542.2px;">Return location (°)</span>
<div class="a in" style="left:1542px;top:627px;width:270px;height:25px;"></div>
<span class="a" style="top:630px;font-size:14px;line-height:20px;color:#111;left:1548.3px;">0</span>
<div class="a" style="left:1731px;top:628px;width:80px;height:23px;background:#f0f0f0"></div>
<span class="a" style="top:632px;font-size:13.5px;line-height:20px;color:#a2a2a2;left:1734px;">&lt;</span>
<span class="a" style="top:631px;font-size:14px;line-height:20px;color:#a2a2a2;left:1754px;">Move</span>
<span class="a" style="top:632px;font-size:13.5px;line-height:20px;color:#a2a2a2;left:1799px;">&gt;</span>
</body>
</html>
